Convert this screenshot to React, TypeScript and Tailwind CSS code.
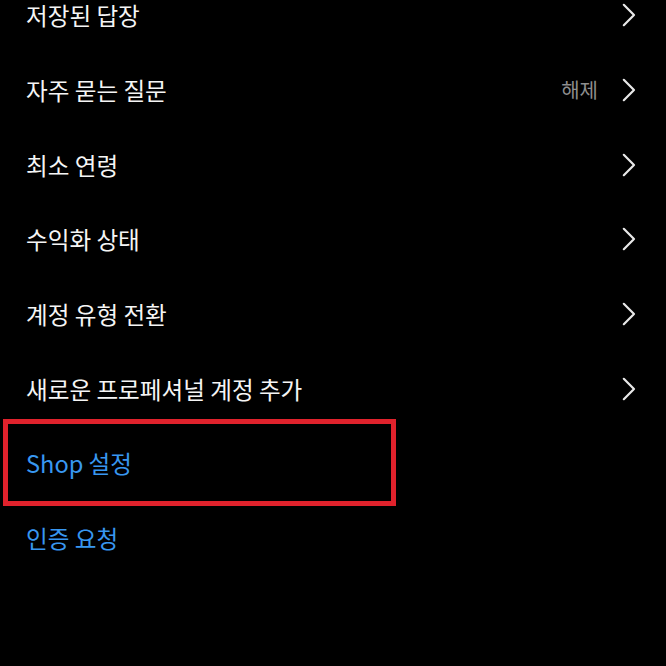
const rows = [
  { label: '저장된 답장', chevron: true },
  { label: '자주 묻는 질문', chevron: true, value: '해제' },
  { label: '최소 연령', chevron: true },
  { label: '수익화 상태', chevron: true },
  { label: '계정 유형 전환', chevron: true },
  { label: '새로운 프로페셔널 계정 추가', chevron: true },
  { label: 'Shop 설정', blue: true },
  { label: '인증 요청', blue: true },
]

function Chevron() {
  return (
    <svg width="14" height="24" viewBox="0 0 14 24" fill="none" className="shrink-0">
      <path d="M1.8 1.8 L12 12 L1.8 22.2" stroke="#e8e8e8" strokeWidth="2.2" strokeLinecap="round" strokeLinejoin="round" />
    </svg>
  )
}

export default function App() {
  return (
    <div
      className="relative h-[666px] w-[666px] overflow-hidden bg-black"
      style={{ fontFamily: '"Noto Sans CJK KR", "Noto Sans", sans-serif' }}
    >
      <div className="-mt-[22px] flex flex-col">
        {rows.map((r) => (
          <div key={r.label} className="flex h-[74.7px] items-center pl-[26px] pr-[30px]">
            <span className={`flex-1 text-[23.6px] leading-[1.2] ${r.blue ? 'text-[#3897f0]' : 'text-[#f5f5f5]'}`}>
              {r.label}
            </span>
            {r.value && <span className="mr-[24px] text-[20px] leading-[1.2] text-[#8e8e8e]">{r.value}</span>}
            {r.chevron && <Chevron />}
          </div>
        ))}
      </div>

      {/* red highlight */}
      <div className="absolute left-[3px] top-[419px] h-[87px] w-[393px] border-[5px] border-[#e0222c]" />
    </div>
  )
}
